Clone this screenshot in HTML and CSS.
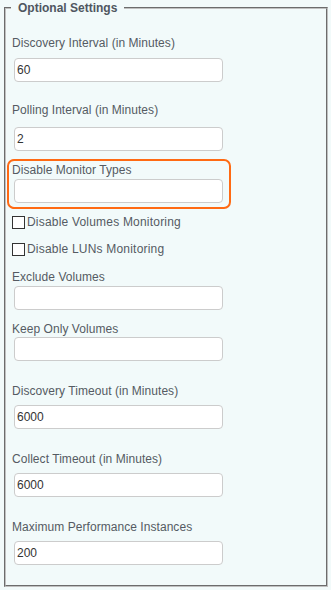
FILE: index.html
```html
<!DOCTYPE html>
<html lang="en">

<head>
    <meta charset="UTF-8">
    <meta name="viewport" content="width=device-width, initial-scale=1.0">
    <title>Optional Settings</title>
    <link rel="stylesheet" href="styles.css">
</head>

<body>

    <fieldset class="settings">
        <legend>Optional Settings</legend>

        <div class="field f-discovery">
            <label for="discovery">Discovery Interval (in Minutes)</label>
            <input type="text" id="discovery" value="60">
        </div>

        <div class="field f-polling">
            <label for="polling">Polling Interval (in Minutes)</label>
            <input type="text" id="polling" value="2">
        </div>

        <div class="field highlight">
            <label for="monitortypes">Disable Monitor Types</label>
            <input type="text" id="monitortypes" value="">
        </div>

        <div class="check c-volumes">
            <input type="checkbox" id="novolumes">
            <label for="novolumes">Disable Volumes Monitoring</label>
        </div>

        <div class="check c-luns">
            <input type="checkbox" id="noluns">
            <label for="noluns">Disable LUNs Monitoring</label>
        </div>

        <div class="field f-exclude">
            <label for="exclude">Exclude Volumes</label>
            <input type="text" id="exclude" value="">
        </div>

        <div class="field f-keep">
            <label for="keep">Keep Only Volumes</label>
            <input type="text" id="keep" value="">
        </div>

        <div class="field f-timeout">
            <label for="discoverytimeout">Discovery Timeout (in Minutes)</label>
            <input type="text" id="discoverytimeout" value="6000">
        </div>

        <div class="field f-timeout">
            <label for="collecttimeout">Collect Timeout (in Minutes)</label>
            <input type="text" id="collecttimeout" value="6000">
        </div>

        <div class="field f-timeout">
            <label for="maxperf">Maximum Performance Instances</label>
            <input type="text" id="maxperf" value="200">
        </div>
    </fieldset>

</body>

</html>
```

FILE: styles.css
```css
* {
    box-sizing: border-box;
}

body {
    margin: 0;
    background: #f2fafa;
    font-family: 'Liberation Sans', Arial, sans-serif;
    font-size: 12px;
    color: #555b63;
}

.settings {
    margin: 0 3px 0 4px;
    padding: 0 6px 20px 5px;
    border: 2px groove #c0c0c0;
    background: #f2fafa;
    min-width: 0;
}

legend {
    padding: 0 7px;
    font-weight: bold;
    font-size: 12px;
    line-height: 16px;
    color: #4f5660;
}

.field label {
    display: block;
    line-height: 16px;
    margin-left: 1px;
    letter-spacing: 0.05px;
}

.field input {
    display: block;
    width: 209px;
    height: 24px;
    margin-left: 3px;
    padding: 0 2px;
    border: 1px solid #ccc;
    border-radius: 4px;
    background: #fff;
    font-family: 'Liberation Sans', Arial, sans-serif;
    font-size: 12px;
    color: #333;
}

.f-discovery {
    margin-top: 19px;
}

.f-discovery input {
    margin-top: 7px;
}

.f-polling {
    margin-top: 20px;
}

.f-polling input {
    margin-top: 9px;
}

.highlight {
    width: 224px;
    margin: 8px 0 0 -4px;
    padding: 1px 6px 4px 3px;
    border: 2px solid #ff6a13;
    border-radius: 7px;
}

.highlight label {
    margin-left: 0;
}

.highlight input {
    margin-top: 1px;
    margin-left: 2px;
}

.check {
    display: flex;
    align-items: center;
    line-height: 16px;
    margin-left: 1px;
    letter-spacing: 0.2px;
}

.check input {
    appearance: none;
    -webkit-appearance: none;
    width: 13px;
    height: 13px;
    margin: 0 2px 0 0;
    border: 1px solid #333;
    background: #fff;
}

.c-volumes {
    margin-top: 5px;
}

.c-luns {
    margin-top: 11px;
}

.f-exclude {
    margin-top: 12px;
}

.f-exclude input {
    margin-top: 1px;
}

.f-keep {
    margin-top: 11px;
}

.f-keep input {
    margin-top: 0;
}

.f-timeout {
    margin-top: 22px;
}

.f-timeout input {
    margin-top: 6px;
}
```
